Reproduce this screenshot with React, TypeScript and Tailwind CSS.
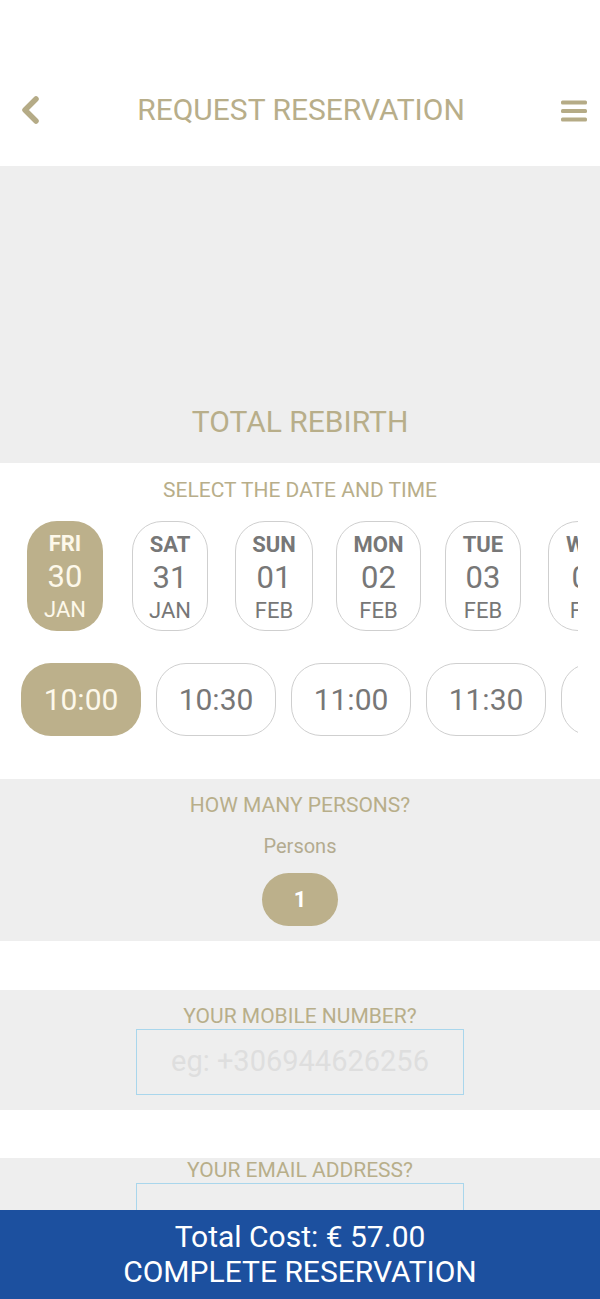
import React from "react";

const dates = [
  { d: "FRI", n: "30", m: "JAN", sel: true, cls: "ml-[27px] w-[76px]" },
  { d: "SAT", n: "31", m: "JAN", sel: false, cls: "ml-[29px] w-[76px]" },
  { d: "SUN", n: "01", m: "FEB", sel: false, cls: "ml-[27px] w-[78px]" },
  { d: "MON", n: "02", m: "FEB", sel: false, cls: "ml-[23px] w-[85px]" },
  { d: "TUE", n: "03", m: "FEB", sel: false, cls: "ml-[24px] w-[76px]" },
  { d: "WED", n: "04", m: "FEB", sel: false, cls: "ml-[27px] w-[82px]" },
];

const times = ["10:00", "10:30", "11:00", "11:30", "12:00"];

export default function App() {
  return (
    <div
      className="relative w-[600px] h-[1299px] overflow-hidden bg-white"
      style={{ fontFamily: "Roboto, 'Noto Sans', sans-serif" }}
    >
      {/* Header */}
      <div className="h-[166px] pt-[92px] px-[20px]">
        <div className="flex items-center justify-between h-[36px]">
          <svg width="22" height="28" viewBox="0 0 22 28" className="-ml-[1px]">
            <path d="M17 3 L6 14 L17 25" fill="none" stroke="#b5ab86" strokeWidth="5.5" strokeLinecap="round" strokeLinejoin="round" />
          </svg>
          <div className="text-[30px] leading-[36px] text-[#b8ae8a]">REQUEST RESERVATION</div>
          <svg width="26" height="24" viewBox="0 0 26 24" className="mt-[2px] mr-[-7px]">
            <rect x="0" y="1.5" width="26" height="4" rx="1.5" fill="#b5ab86" />
            <rect x="0" y="10" width="26" height="4" rx="1.5" fill="#b5ab86" />
            <rect x="0" y="18.5" width="26" height="4" rx="1.5" fill="#b5ab86" />
          </svg>
        </div>
      </div>

      {/* Hero */}
      <div className="h-[297px] bg-[#eeeeee] flex items-end justify-center pb-[23px]">
        <div className="text-[30px] leading-[36px] text-[#b8ae8a]">TOTAL REBIRTH</div>
      </div>

      {/* Date/time */}
      <div className="pt-[15px] pb-[43px] bg-white">
        <div className="text-center text-[21px] leading-[24px] text-[#b8ae8a]">SELECT THE DATE AND TIME</div>
        <div className="mt-[19px] w-[578px] overflow-hidden">
          <div className="flex">
            {dates.map((x) => (
              <div
                key={x.d}
                className={`${x.cls} shrink-0 h-[110px] rounded-[30px] flex flex-col items-center pt-[10px] ${
                  x.sel ? "bg-[#bcb08b] text-[#fdf8ea]" : "border border-[#cfcfcf] text-[#777777]"
                }`}
              >
                <div className="text-[22px] leading-[26px] font-bold">{x.d}</div>
                <div className="text-[31px] leading-[40px]">{x.n}</div>
                <div className="text-[22px] leading-[26px]">{x.m}</div>
              </div>
            ))}
          </div>
        </div>
        <div className="mt-[32px] w-[578px] overflow-hidden">
          <div className="flex gap-[15px] pl-[21px]">
            {times.map((t, i) => (
              <div
                key={t}
                className={`shrink-0 w-[120px] h-[73px] rounded-[30px] flex items-center justify-center text-[30px] ${
                  i === 0 ? "bg-[#bcb08b] text-[#fdf8ea]" : "border border-[#cfcfcf] text-[#777777]"
                }`}
              >
                {t}
              </div>
            ))}
          </div>
        </div>
      </div>

      {/* Persons */}
      <div className="bg-[#eeeeee] pt-[14px] pb-[15px] flex flex-col items-center">
        <div className="text-[21px] leading-[24px] text-[#b8ae8a]">HOW MANY PERSONS?</div>
        <div className="mt-[17px] text-[20px] leading-[24px] text-[#b3ab90]">Persons</div>
        <div className="mt-[15px] w-[76px] h-[53px] rounded-full bg-[#bcb08b] flex items-center justify-center text-white text-[22px] font-bold">
          1
        </div>
      </div>

      <div className="h-[49px] bg-white" />

      {/* Mobile */}
      <div className="bg-[#eeeeee] pt-[14px] pb-[15px] flex flex-col items-center">
        <div className="text-[21px] leading-[24px] text-[#b8ae8a]">YOUR MOBILE NUMBER?</div>
        <div className="mt-[1px] w-[328px] h-[66px] border border-[#a9d6ec] flex items-center justify-center text-[29px] text-[#dedede]">
          eg: +306944626256
        </div>
      </div>

      <div className="h-[48px] bg-white" />

      {/* Email */}
      <div className="bg-[#eeeeee] pt-0 pb-[15px] flex flex-col items-center h-[200px]">
        <div className="text-[21px] leading-[24px] text-[#b8ae8a]">YOUR EMAIL ADDRESS?</div>
        <div className="mt-[1px] w-[328px] h-[66px] border border-[#a9d6ec]" />
      </div>

      {/* Bottom bar */}
      <div className="absolute left-0 right-0 bottom-0 h-[89px] bg-[#1c509f] flex flex-col items-center pt-[9px] text-white">
        <div className="text-[30px] leading-[35px]">Total Cost: € 57.00</div>
        <div className="text-[30px] leading-[35px]">COMPLETE RESERVATION</div>
      </div>
    </div>
  );
}
